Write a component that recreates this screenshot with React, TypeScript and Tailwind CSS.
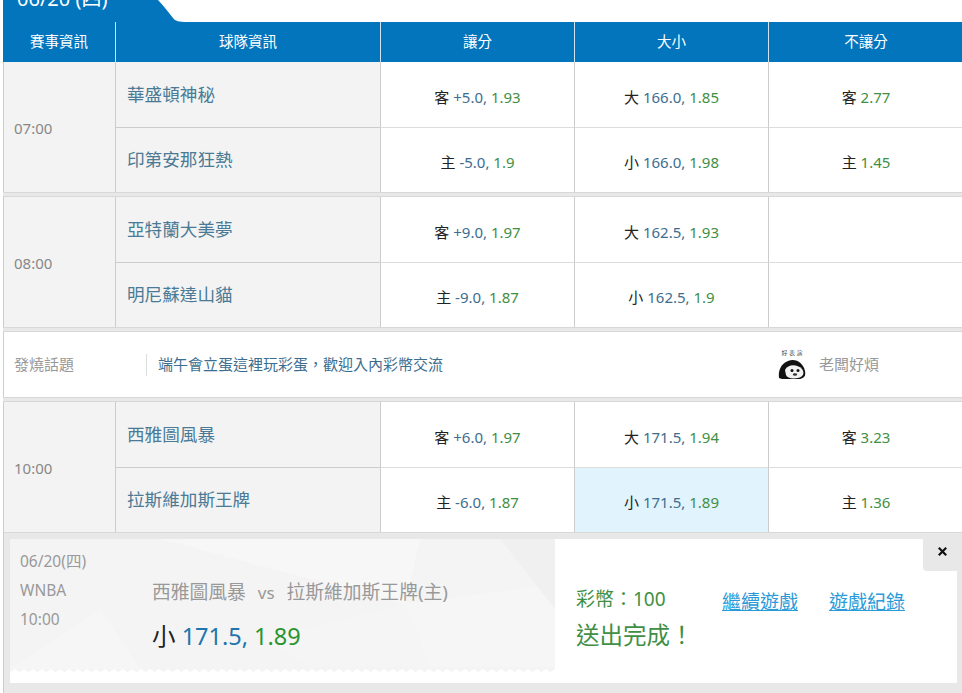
const FONT = "font-['Noto_Sans','Noto_Sans_CJK_TC',sans-serif]";

function Odds({ k, a, b, active }: { k?: string; a?: string; b?: string; active?: boolean }) {
  return (
    <div className={`flex h-full items-center justify-center pt-[5px] text-[15px] ${active ? 'bg-[#e1f3fd]' : 'bg-white'}`}>
      {k && (
        <span>
          <span className="text-[#222222]">{k} </span>
          {b ? (
            <>
              <span className="text-[#3d6e8f]">{a}, </span>
              <span className="text-[#3f8f45]">{b}</span>
            </>
          ) : (
            <span className="text-[#3f8f45]">{a}</span>
          )}
        </span>
      )}
    </div>
  );
}

type Row = { team: string; hcp: [string, string, string]; ou: [string, string, string]; ml?: [string, string]; active?: boolean };

function Game({ time, rows }: { time: string; rows: Row[] }) {
  return (
    <div className="grid h-[130px] grid-cols-[111px_265px_194px_194px_195px] grid-rows-[66px_64px] border-l border-[#cccccc] bg-white">
      <div className="row-span-2 flex items-center bg-[#f3f3f3] pl-[10px] pt-[2px] text-[15px] text-[#888888]">{time}</div>
      {rows.map((r, i) => (
        <div key={r.team} className="contents">
          <div className={`flex items-center border-l border-[#cccccc] bg-[#f3f3f3] pl-[11px] text-[17.6px] text-[#4a7a95] ${i === 0 ? 'border-b' : ''}`}>
            <span className="-mt-[1px]">{r.team}</span>
          </div>
          <div className={`border-l border-[#cccccc] ${i === 0 ? 'border-b border-b-[#dddddd]' : ''}`}><Odds k={r.hcp[0]} a={r.hcp[1]} b={r.hcp[2]} /></div>
          <div className={`border-l border-[#cccccc] ${i === 0 ? 'border-b border-b-[#dddddd]' : ''}`}><Odds k={r.ou[0]} a={r.ou[1]} b={r.ou[2]} active={r.active} /></div>
          <div className={`border-l border-[#cccccc] ${i === 0 ? 'border-b border-b-[#dddddd]' : ''}`}>{r.ml ? <Odds k={r.ml[0]} a={r.ml[1]} /> : <Odds />}</div>
        </div>
      ))}
    </div>
  );
}

function Sep() {
  return <div className="ml-[3px] h-[5px] border-y border-[#d8d8d8] bg-[#e8e8e8]" />;
}

function Panda() {
  return (
    <div className="flex w-[30px] flex-col items-center">
      <span className="text-[6px] leading-[8px] text-[#444444]">好 表 演</span>
      <svg width="28" height="22" viewBox="0 0 28 22" className="mt-[1px]">
        <path d="M1 20 C0 12 3 6 10 3 C18 0 25 5 27 13 C28 18 26 20 22 21 L4 21 Z" fill="#111111" />
        <path d="M7 12 C10 6 19 6 24 11 C27 15 25 19 20 20 C14 21 9 20 8 17 Z" fill="#f2f2f2" />
        <circle cx="14" cy="12.5" r="1.5" fill="#111111" />
        <circle cx="20" cy="12.5" r="1.5" fill="#111111" />
        <ellipse cx="17" cy="16.5" rx="2.2" ry="1.3" fill="#333333" />
      </svg>
    </div>
  );
}

function zigzag(): string {
  let d = 'M0 0H545V130';
  for (let x = 545, up = false; x > 0; x -= 4.5, up = !up) {
    d += `L${x - 4.5} ${up ? 130 : 133}`;
  }
  return d + 'Z';
}

export default function App() {
  return (
    <div className={`h-[693px] w-[962px] overflow-hidden bg-white ${FONT}`}>
      <div className="ml-[3px] flex h-[22px] items-end">
        <div className="h-[22px] w-[152px] overflow-hidden bg-[#0275bd] pl-[14px] text-[20px] leading-[22px] text-white">
          <div className="-mt-[12px]">06/20 (四)</div>
        </div>
        <svg width="32" height="22" viewBox="0 0 32 22" className="shrink-0">
          <path d="M0 0 H3 C9 6 14 13 18 18 C20 21 24 22 32 22 H0 Z" fill="#0275bd" />
        </svg>
      </div>
      <div className="ml-[3px] grid h-[40px] grid-cols-[112px_265px_194px_194px_195px] bg-[#0275bd] text-[14.5px] text-white">
        <div className="flex items-center justify-center">賽事資訊</div>
        <div className="flex items-center justify-center border-l border-[#cfe3f2]">球隊資訊</div>
        <div className="flex items-center justify-center border-l border-[#cfe3f2]">讓分</div>
        <div className="flex items-center justify-center border-l border-[#cfe3f2]">大小</div>
        <div className="flex items-center justify-center border-l border-[#cfe3f2]">不讓分</div>
      </div>
      <div className="ml-[3px]">
        <Game
          time="07:00"
          rows={[
            { team: '華盛頓神秘', hcp: ['客', '+5.0', '1.93'], ou: ['大', '166.0', '1.85'], ml: ['客', '2.77'] },
            { team: '印第安那狂熱', hcp: ['主', '-5.0', '1.9'], ou: ['小', '166.0', '1.98'], ml: ['主', '1.45'] },
          ]}
        />
      </div>
      <Sep />
      <div className="ml-[3px]">
        <Game
          time="08:00"
          rows={[
            { team: '亞特蘭大美夢', hcp: ['客', '+9.0', '1.97'], ou: ['大', '162.5', '1.93'] },
            { team: '明尼蘇達山貓', hcp: ['主', '-9.0', '1.87'], ou: ['小', '162.5', '1.9'] },
          ]}
        />
      </div>
      <Sep />
      <div className="ml-[3px] flex h-[65px] items-center border-l border-[#cccccc] bg-white">
        <div className="w-[142px] pl-[10px] text-[15px] text-[#999999]">發燒話題</div>
        <div className="flex h-[22px] w-[631px] items-center border-l border-[#dddddd] pl-[11px] text-[15px] text-[#3d6e8f]">
          端午會立蛋這裡玩彩蛋，歡迎入內彩幣交流
        </div>
        <Panda />
        <div className="ml-[12px] text-[15px] text-[#999999]">老闆好煩</div>
      </div>
      <Sep />
      <div className="ml-[3px]">
        <Game
          time="10:00"
          rows={[
            { team: '西雅圖風暴', hcp: ['客', '+6.0', '1.97'], ou: ['大', '171.5', '1.94'], ml: ['客', '3.23'] },
            { team: '拉斯維加斯王牌', hcp: ['主', '-6.0', '1.87'], ou: ['小', '171.5', '1.89'], ml: ['主', '1.36'], active: true },
          ]}
        />
      </div>
      <div className="ml-[3px] h-[161px] border-l border-t border-l-[#cccccc] border-t-[#d8d8d8] bg-[#e8e8e8] pl-[6px] pr-[5px] pt-[6px]">
        <div className="relative flex h-[144px] bg-white">
          <div className="relative h-full w-[545px] shrink-0 overflow-hidden">
            <svg width="545" height="144" viewBox="0 0 545 144" className="absolute inset-0">
              <path d={zigzag()} fill="#f4f4f4" />
              <path d="M0 130L90 70L130 130Z" fill="#f6f6f6" />
              <path d="M150 0L410 0L395 65Z" fill="#f7f7f7" />
              <path d="M395 65L545 45V128H420Z" fill="#f6f6f6" />
              <path d="M490 0H545V70Z" fill="#f0f0f0" />
              <path d="M250 100L395 65L420 128H300Z" fill="#f5f5f5" />
            </svg>
            <div className="relative flex pl-[10px] pt-[8px]">
              <div className="w-[132px] text-[15.5px] leading-[29px] text-[#999999]">
                <div>06/20(四)</div>
                <div>WNBA</div>
                <div>10:00</div>
              </div>
              <div className="pt-[31px]">
                <div className="text-[18.8px] leading-[28px] text-[#999999]">西雅圖風暴 <span className="mx-[7px] text-[17px]">vs</span> 拉斯維加斯王牌(主)</div>
                <div className="mt-[12px] text-[23.5px] leading-[34px]">
                  <span className="text-[#222222]">小 </span>
                  <span className="text-[#1f75ad]">171.5, </span>
                  <span className="text-[#2b942f]">1.89</span>
                </div>
              </div>
            </div>
          </div>
          <div className="pl-[21px] pt-[45px] text-[#3f8f45]">
            <div className="text-[19px] leading-[30px]">彩幣：100</div>
            <div className="mt-[6px] text-[23.5px] leading-[30px]">送出完成！</div>
          </div>
          <div className="absolute left-[712px] top-[49px] flex gap-[31px] text-[19px] leading-[28px] text-[#2a9bd8] underline">
            <span>繼續遊戲</span>
            <span>遊戲紀錄</span>
          </div>
          <div className="absolute right-0 top-0 flex h-[32px] w-[34px] items-start justify-center rounded-bl-[4px] bg-[#e8e8e8] pl-[4px] pt-[8px]">
            <svg width="9" height="9" viewBox="0 0 9 9">
              <path d="M0.8 0.8L8.2 8.2M8.2 0.8L0.8 8.2" stroke="#111111" strokeWidth="2.2" />
            </svg>
          </div>
        </div>
      </div>
    </div>
  );
}
